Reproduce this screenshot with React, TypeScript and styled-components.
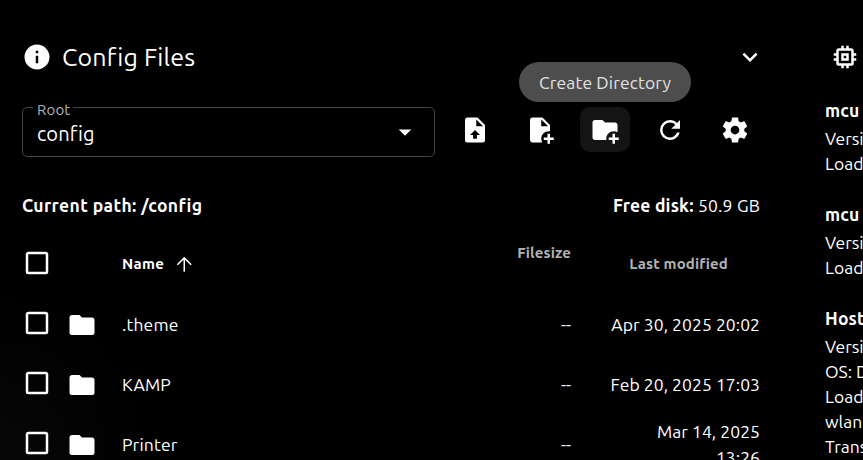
import React from 'react';
import styled, { createGlobalStyle } from 'styled-components';

const GlobalStyle = createGlobalStyle`
  * { box-sizing: border-box; }
  html, body { margin: 0; background: #000; overflow: hidden; }
  button { font: inherit; color: inherit; border: 0; padding: 0; background: none; }
`;

const icons = {
  info: 'M13,9H11V7H13M13,17H11V11H13M12,2A10,10 0 0,0 2,12A10,10 0 0,0 12,22A10,10 0 0,0 22,12A10,10 0 0,0 12,2Z',
  chevron: 'M7.41,8.58L12,13.17L16.59,8.58L18,10L12,16L6,10L7.41,8.58Z',
  menuDown: 'M7,10L12,15L17,10H7Z',
  fileUpload: 'M14,2H6C4.89,2 4,2.89 4,4V20A2,2 0 0,0 6,22H18A2,2 0 0,0 20,20V8L14,2M13.5,16V19H10.5V16H8L12,12L16,16H13.5M13,9V3.5L18.5,9H13Z',
  filePlus: 'M14 2H6C4.89 2 4 2.89 4 4V20C4 21.11 4.89 22 6 22H13.81C13.28 21.09 13 20.05 13 19C13 15.69 15.69 13 19 13C19.34 13 19.67 13.03 20 13.08V8L14 2M13 9V3.5L18.5 9H13M23 20H20V23H18V20H15V18H18V15H20V18H23V20Z',
  folderPlus: 'M13 19C13 19.34 13.04 19.67 13.09 20H4C2.9 20 2 19.11 2 18V6C2 4.89 2.89 4 4 4H10L12 6H20C21.1 6 22 6.89 22 8V13.81C21.12 13.3 20.1 13 19 13C15.69 13 13 15.69 13 19M20 18V15H18V18H15V20H18V23H20V20H23V18H20Z',
  folder: 'M10,4H4C2.89,4 2,4.89 2,6V18A2,2 0 0,0 4,20H20A2,2 0 0,0 22,18V8C22,6.89 21.1,6 20,6H12L10,4Z',
  refresh: 'M17.65,6.35C16.2,4.9 14.21,4 12,4A8,8 0 0,0 4,12A8,8 0 0,0 12,20C15.73,20 18.84,17.45 19.73,14H17.65C16.83,16.33 14.61,18 12,18A6,6 0 0,1 6,12A6,6 0 0,1 12,6C13.66,6 15.14,6.69 16.22,7.78L13,11H20V4L17.65,6.35Z',
  cog: 'M12,15.5A3.5,3.5 0 0,1 8.5,12A3.5,3.5 0 0,1 12,8.5A3.5,3.5 0 0,1 15.5,12A3.5,3.5 0 0,1 12,15.5M19.43,12.97C19.47,12.65 19.5,12.33 19.5,12C19.5,11.67 19.47,11.34 19.43,11L21.54,9.37C21.73,9.22 21.78,8.95 21.66,8.73L19.66,5.27C19.54,5.05 19.27,4.96 19.05,5.05L16.56,6.05C16.04,5.66 15.5,5.32 14.87,5.07L14.5,2.42C14.46,2.18 14.25,2 14,2H10C9.75,2 9.54,2.18 9.5,2.42L9.13,5.07C8.5,5.32 7.96,5.66 7.44,6.05L4.95,5.05C4.73,4.96 4.46,5.05 4.34,5.27L2.34,8.73C2.21,8.95 2.27,9.22 2.46,9.37L4.57,11C4.53,11.34 4.5,11.67 4.5,12C4.5,12.33 4.53,12.65 4.57,12.97L2.46,14.63C2.27,14.78 2.21,15.05 2.34,15.27L4.34,18.73C4.46,18.95 4.73,19.03 4.95,18.95L7.44,17.94C7.96,18.34 8.5,18.68 9.13,18.93L9.5,21.58C9.54,21.82 9.75,22 10,22H14C14.25,22 14.46,21.82 14.5,21.58L14.87,18.93C15.5,18.67 16.04,18.34 16.56,17.94L19.05,18.95C19.27,19.03 19.54,18.95 19.66,18.73L21.66,15.27C21.78,15.05 21.73,14.78 21.54,14.63L19.43,12.97Z',
  memory: 'M17,17H7V7H17M21,11V9H19V7C19,5.89 18.1,5 17,5H15V3H13V5H11V3H9V5H7C5.89,5 5,5.89 5,7V9H3V11H5V13H3V15H5V17A2,2 0 0,0 7,19H9V21H11V19H13V21H15V19H17A2,2 0 0,0 19,17V15H21V13H19V11M13,13H11V11H13M15,9H9V15H15V9Z',
  checkbox: 'M19,3H5C3.89,3 3,3.89 3,5V19A2,2 0 0,0 5,21H19A2,2 0 0,0 21,19V5C21,3.89 20.1,3 19,3M19,5V19H5V5H19Z',
};

const Svg = styled.svg`
  display: block;
  flex: none;
  width: 30px;
  height: 30px;
  fill: #fff;
`;

const ArrowSvg = styled.svg`
  display: block;
  flex: none;
  width: 22.5px;
  height: 22.5px;
  margin-top: 2px;
  fill: none;
  stroke: #fff;
  stroke-width: 1.6;
`;

function Icon({ name }: { name: keyof typeof icons }) {
  return (
    <Svg viewBox="0 0 24 24" aria-hidden="true">
      <path fillRule="evenodd" d={icons[name]} />
    </Svg>
  );
}

function SortArrow() {
  return (
    <ArrowSvg viewBox="0 0 24 24" aria-hidden="true">
      <path d="M12 20V5M4.6 12.6L12 5.2L19.4 12.6" />
    </ArrowSvg>
  );
}

const Page = styled.div`
  display: grid;
  grid-template-columns: 738px 200px;
  column-gap: 65px;
  height: 460px;
  padding: 32px 0 0 22px;
  overflow: hidden;
  color: #fff;
  background: radial-gradient(ellipse 150px 170px at 0 100%, #070707, #000);
  font-family: Ubuntu, 'Noto Sans', sans-serif;
  font-size: 17.5px;
  line-height: 25px;
  white-space: nowrap;
`;

const Panel = styled.section`
  min-width: 0;
`;

const PanelHeader = styled.header<{ $inset?: number }>`
  display: flex;
  align-items: center;
  height: 50px;
  padding-left: ${p => p.$inset ?? 0}px;
`;

const Title = styled.h1`
  flex: 1;
  margin: 0 0 0 10px;
  font-size: 25px;
  font-weight: 400;
  letter-spacing: 0.16px;
`;

const IconSlot = styled.div`
  display: flex;
  justify-content: center;
  width: 20px;
`;

const Toolbar = styled.div`
  display: flex;
  gap: 15px;
  margin-top: 25px;
`;

const Select = styled.fieldset`
  display: flex;
  align-items: center;
  justify-content: space-between;
  width: 413px;
  height: 57px;
  margin: -7px 0 0;
  padding: 0 14px 7px 14px;
  border: 1px solid #444;
  border-radius: 5px;
`;

const SelectLabel = styled.legend`
  height: 15px;
  margin-left: -4px;
  padding: 0 3px 0 4px;
  font-size: 15px;
  line-height: 19px;
  letter-spacing: 0.15px;
  color: #b3b3b3;
`;

const SelectValue = styled.span`
  padding-top: 2px;
  font-size: 20px;
  letter-spacing: 0.1px;
`;

const Tool = styled.button<{ $active?: boolean }>`
  position: relative;
  display: flex;
  align-items: center;
  justify-content: center;
  width: 50px;
  height: 45px;
  border-radius: 10px;
  background: ${p => (p.$active ? '#141414' : 'transparent')};
`;

const Tooltip = styled.span`
  position: absolute;
  bottom: 50px;
  left: 50%;
  width: 172px;
  height: 40px;
  transform: translateX(-50%);
  border-radius: 20px;
  background: #4d4d4d;
  color: #e3e3e3;
  line-height: 41px;
  text-align: center;
  letter-spacing: 0.12px;
`;

const PathRow = styled.div`
  display: flex;
  justify-content: space-between;
  margin-top: 36px;
  letter-spacing: 0.2px;
`;

const Strong = styled.span<{ $track?: number }>`
  font-weight: 700;
  letter-spacing: ${p => p.$track ?? 0.2}px;
`;

const Row = styled.div`
  display: grid;
  grid-template-columns: 45px 55px 349px 100px 1fr;
  align-items: center;
  height: 60px;
`;

const HeadRow = styled(Row)`
  height: 65px;
  margin-top: 12px;
  font-size: 15px;
  font-weight: 700;
  letter-spacing: 0.13px;
`;

const CheckCell = styled.div`
  padding-bottom: 4px;
`;

const HeadCheckCell = styled.div`
  padding-top: 1px;
`;

const SortCell = styled.div`
  display: flex;
  grid-column: 3;
  gap: 9px;
  align-items: center;
  padding-top: 2px;
  letter-spacing: 0.3px;
`;

const SizeHead = styled.div`
  padding-bottom: 21px;
  color: #b3b3b3;
  text-align: right;
`;

const DateHead = styled.div`
  padding: 2px 32px 0 0;
  color: #b3b3b3;
  text-align: right;
`;

const NameCell = styled.div`
  padding-bottom: 1px;
  letter-spacing: 0.15px;
`;

const SizeCell = styled.div`
  padding-bottom: 1px;
  text-align: right;
`;

const DateCell = styled.div`
  justify-self: end;
  max-width: 150px;
  line-height: 26px;
  text-align: right;
  white-space: pre-line;
  letter-spacing: 0.06px;
`;

const SystemBlock = styled.div`
  height: 104px;
`;

const Systems = styled.div`
  margin-top: 16px;
`;

const SystemName = styled.div`
  height: 28px;
  font-weight: 700;
  letter-spacing: 0.2px;
`;

const files = [
  { name: '.theme', date: 'Apr\u00a030,\u00a02025\u00a020:02' },
  { name: 'KAMP', date: 'Feb\u00a020,\u00a02025\u00a017:03' },
  { name: 'Printer', date: 'Mar 14, 2025\n13:26' },
];

const systems = [
  { name: 'mcu', lines: ['Version', 'Load'] },
  { name: 'mcu', lines: ['Version', 'Load'] },
  { name: 'Host', lines: ['Version', 'OS: Debian', 'Load', 'wlan0', 'Transfer'] },
];

export default function App() {
  return (
    <>
      <GlobalStyle />
      <Page>
        <Panel>
          <PanelHeader>
            <Icon name="info" />
            <Title>Config Files</Title>
            <IconSlot><Icon name="chevron" /></IconSlot>
          </PanelHeader>
          <Toolbar>
            <Select>
              <SelectLabel>Root</SelectLabel>
              <SelectValue>config</SelectValue>
              <Icon name="menuDown" />
            </Select>
            <Tool aria-label="Upload File"><Icon name="fileUpload" /></Tool>
            <Tool aria-label="Create File"><Icon name="filePlus" /></Tool>
            <Tool $active>
              <Icon name="folderPlus" />
              <Tooltip>Create Directory</Tooltip>
            </Tool>
            <Tool aria-label="Refresh"><Icon name="refresh" /></Tool>
            <Tool aria-label="Settings"><Icon name="cog" /></Tool>
          </Toolbar>
          <PathRow>
            <Strong $track={0.4}>Current path: /config</Strong>
            <span><Strong>Free disk:</Strong> 50.9 GB</span>
          </PathRow>
          <HeadRow>
            <HeadCheckCell><Icon name="checkbox" /></HeadCheckCell>
            <SortCell>Name <SortArrow /></SortCell>
            <SizeHead>Filesize</SizeHead>
            <DateHead>Last modified</DateHead>
          </HeadRow>
          {files.map(file => (
            <Row key={file.name}>
              <CheckCell><Icon name="checkbox" /></CheckCell>
              <Icon name="folder" />
              <NameCell>{file.name}</NameCell>
              <SizeCell>--</SizeCell>
              <DateCell>{file.date}</DateCell>
            </Row>
          ))}
        </Panel>
        <Panel>
          <PanelHeader $inset={5}>
            <Icon name="memory" />
          </PanelHeader>
          <Systems>
            {systems.map((system, i) => (
              <SystemBlock key={i}>
                <SystemName>{system.name}</SystemName>
                {system.lines.map(line => <div key={line}>{line}</div>)}
              </SystemBlock>
            ))}
          </Systems>
        </Panel>
      </Page>
    </>
  );
}
